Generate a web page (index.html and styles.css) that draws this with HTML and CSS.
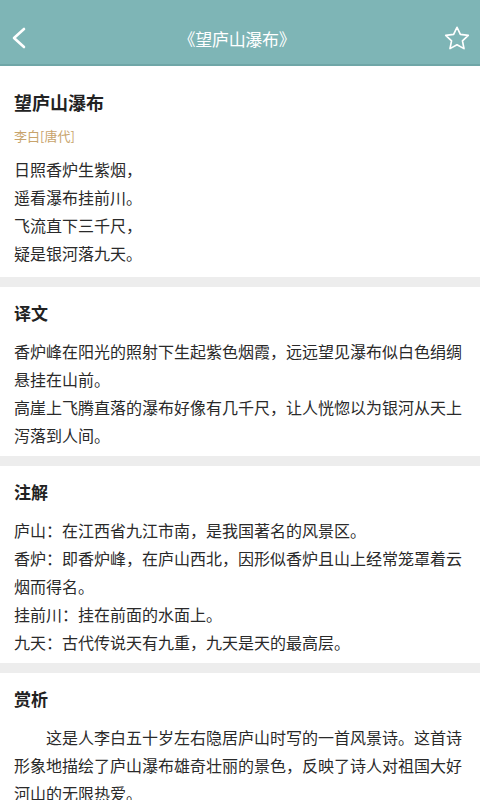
FILE: index.html
```html
<!DOCTYPE html>
<html lang="zh-CN">
<head>
<meta charset="utf-8">
<link rel="stylesheet" href="styles.css">
</head>
<body>
<header class="header">
  <div class="toolbar">
    <svg class="back" width="20" height="24" viewBox="0 0 20 24"><polyline points="14,3 4,12 14,21" fill="none" stroke="#fff" stroke-width="2.6" stroke-linecap="round" stroke-linejoin="round"/></svg>
    <div class="htitle">《望庐山瀑布》</div>
    <svg class="star" width="26" height="24" viewBox="0 0 24 23"><polygon points="12,1.2 15.23,8.05 22.8,9 17.23,14.2 18.7,21.7 12,18 5.3,21.7 6.77,14.2 1.2,9 8.77,8.05" fill="none" stroke="#fff" stroke-width="1.6" stroke-linejoin="round"/></svg>
  </div>
</header>
<main>
  <section class="card first">
    <h1 class="title">望庐山瀑布</h1>
    <div class="author">李白[唐代]</div>
    <div class="poem">
      <p>日照香炉生紫烟，</p>
      <p>遥看瀑布挂前川。</p>
      <p>飞流直下三千尺，</p>
      <p>疑是银河落九天。</p>
    </div>
  </section>
  <section class="card">
    <h2 class="heading">译文</h2>
    <div class="text">
      <p>香炉峰在阳光的照射下生起紫色烟霞，远远望见瀑布似白色绢绸悬挂在山前。</p>
      <p>高崖上飞腾直落的瀑布好像有几千尺，让人恍惚以为银河从天上泻落到人间。</p>
    </div>
  </section>
  <section class="card">
    <h2 class="heading">注解</h2>
    <div class="text">
      <p>庐山：在江西省九江市南，是我国著名的风景区。</p>
      <p>香炉：即香炉峰，在庐山西北，因形似香炉且山上经常笼罩着云烟而得名。</p>
      <p>挂前川：挂在前面的水面上。</p>
      <p>九天：古代传说天有九重，九天是天的最高层。</p>
    </div>
  </section>
  <section class="card">
    <h2 class="heading">赏析</h2>
    <div class="text">
      <p class="indent">这是人李白五十岁左右隐居庐山时写的一首风景诗。这首诗形象地描绘了庐山瀑布雄奇壮丽的景色，反映了诗人对祖国大好河山的无限热爱。</p>
    </div>
  </section>
</main>
</body>
</html>
```
FILE: styles.css
```css
html, body {
  margin: 0;
  padding: 0;
  background: #ededed;
  font-family: "Noto Sans CJK SC", "Noto Sans", sans-serif;
  color: #2a2a2a;
  overflow: hidden;
}
.header {
  background: #7eb5b6;
  padding-top: 12px;
  border-bottom: 2px solid #6fa6a7;
}
.toolbar {
  height: 52px;
  display: flex;
  align-items: center;
  justify-content: space-between;
  padding: 0 10px 0 10px;
}
.back { display: block; }
.star { display: block; }
.htitle {
  color: #fff;
  font-size: 17px;
  letter-spacing: -0.3px;
}
main {
  display: flex;
  flex-direction: column;
  gap: 10px;
}
.card {
  background: #fff;
  padding: 14px 14px 7px 14px;
}
.card.first {
  padding-top: 24px;
  padding-bottom: 10px;
}
.title {
  margin: 0;
  font-size: 18px;
  line-height: 24px;
  font-weight: bold;
  color: #222;
}
.author {
  margin-top: 12px;
  font-size: 13px;
  line-height: 20px;
  color: #c8a46c;
}
.poem {
  margin-top: 9px;
}
p {
  margin: 0;
  font-size: 16px;
  line-height: 28px;
}
.heading {
  margin: 0 0 12px 0;
  font-size: 17px;
  line-height: 24px;
  font-weight: bold;
  color: #222;
}
.indent { text-indent: 2em; }
```
